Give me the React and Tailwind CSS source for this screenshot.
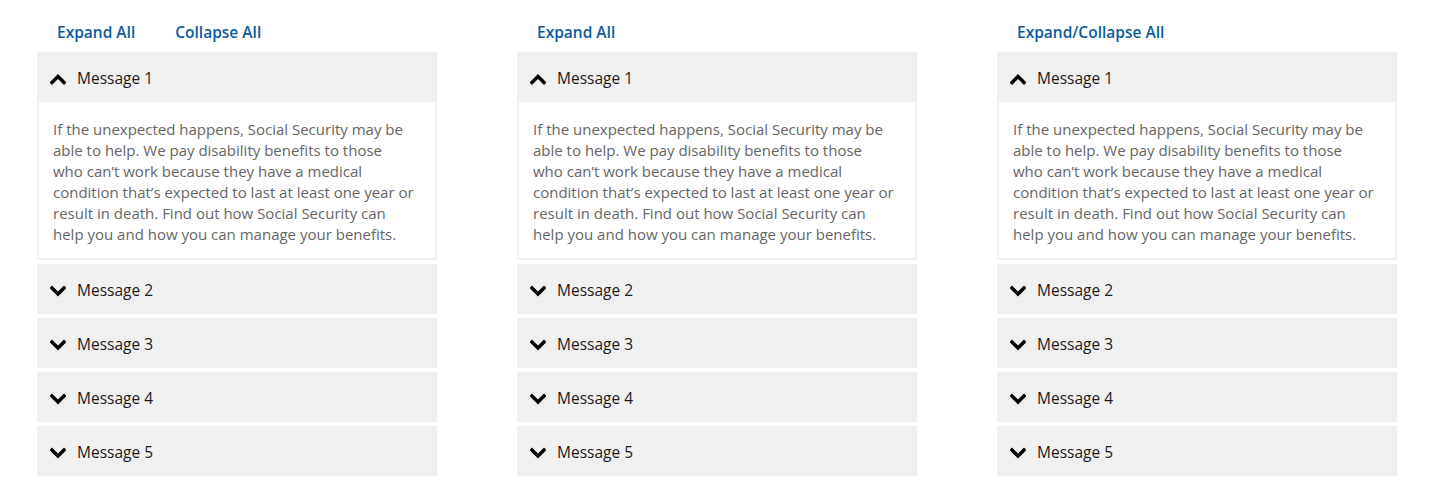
import React from "react";

const LINES = [
  "If the unexpected happens, Social Security may be",
  "able to help. We pay disability benefits to those",
  "who can\u2019t work because they have a medical",
  "condition that\u2019s expected to last at least one year or",
  "result in death. Find out how Social Security can",
  "help you and how you can manage your benefits.",
];

function Chevron({ up }) {
  return (
    <svg width="16" height="12" viewBox="0 0 16 12" className="shrink-0">
      <polyline
        points={up ? "2,9.5 8,3.5 14,9.5" : "2,3 8,9 14,3"}
        fill="none"
        stroke="#000"
        strokeWidth="3.4"
        strokeLinecap="square"
      />
    </svg>
  );
}

function Accordion({ links }) {
  return (
    <div className="w-[400px] shrink-0">
      <div className="flex h-[52px] items-center pt-[14px]">
        {links.map((l) => (
          <span key={l} className="px-5 text-[15.5px] font-semibold text-[#0b5b9c]">
            {l}
          </span>
        ))}
      </div>
      <div className="flex flex-col gap-[4px]">
        <div>
          <div className="flex h-[50px] items-center gap-[11px] bg-[#f0f0f0] pl-[13px] pt-[3px] text-[15.5px] text-[#1b1b1b]">
            <Chevron up />
            <span>Message 1</span>
          </div>
          <div className="border-2 border-t-0 border-[#f0f0f0] bg-white px-[14px] pb-[13px] pt-[17px] text-[15px] leading-[21px] text-[#666]">
            {LINES.map((l) => (
              <div key={l} className="whitespace-nowrap">
                {l}
              </div>
            ))}
          </div>
        </div>
        {[2, 3, 4, 5].map((n) => (
          <div
            key={n}
            className="flex h-[50px] items-center gap-[11px] bg-[#f0f0f0] pl-[13px] pt-[3px] text-[15.5px] text-[#1b1b1b]"
          >
            <Chevron />
            <span>Message {n}</span>
          </div>
        ))}
      </div>
    </div>
  );
}

export default function App() {
  return (
    <div
      className="flex h-[492px] w-[1429px] gap-[80px] bg-white pl-[37px]"
      style={{ fontFamily: '"Open Sans", "Noto Sans", sans-serif' }}
    >
      <Accordion links={["Expand All", "Collapse All"]} />
      <Accordion links={["Expand All"]} />
      <Accordion links={["Expand/Collapse All"]} />
    </div>
  );
}
